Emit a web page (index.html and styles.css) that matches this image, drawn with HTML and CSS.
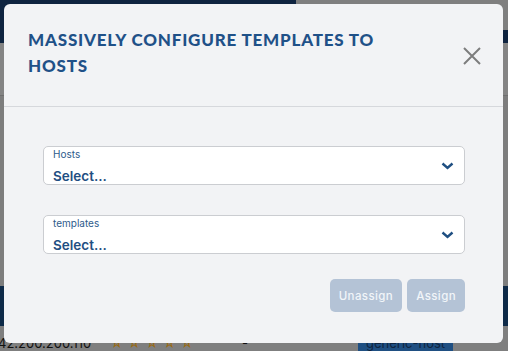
FILE: index.html
```html
<!DOCTYPE html>
<html lang="en">
<head>
    <meta charset="UTF-8">
    <title>Templates</title>
    <link rel="stylesheet" href="styles.css">
</head>
<body>
    <!-- page behind the dimmed overlay -->
    <div class="page">
        <div class="topbar">
            <div class="topbar-dark"></div>
            <div class="topbar-rest"></div>
        </div>
        <div class="toolbar"></div>
        <div class="content"></div>
        <div class="table-head"></div>
        <div class="table-row">
            <span class="ip">42.200.200.110</span>
            <span class="stars">&#9734;&#9734;&#9734;&#9734;&#9734;</span>
            <span class="dash">-</span>
            <span class="tag">generic-host</span>
        </div>
    </div>

    <div class="modal">
        <div class="modal-header">
            <h2 class="modal-title">Massively configure templates to hosts</h2>
            <button class="close" type="button">
                <svg width="18" height="18" viewBox="0 0 18 18">
                    <path d="M1 1 L17 17 M17 1 L1 17" stroke="#7d7d7d" stroke-width="2" fill="none"/>
                </svg>
            </button>
        </div>
        <div class="modal-body">
            <div class="select">
                <div class="select-text">
                    <span class="select-label">Hosts</span>
                    <span class="select-value">Select...</span>
                </div>
                <svg class="chevron" width="13" height="8" viewBox="0 0 13 8">
                    <path d="M1.5 1.5 L6.5 6 L11.5 1.5" stroke="#1f4f82" stroke-width="2.4" fill="none"/>
                </svg>
            </div>
            <div class="select">
                <div class="select-text">
                    <span class="select-label">templates</span>
                    <span class="select-value">Select...</span>
                </div>
                <svg class="chevron" width="13" height="8" viewBox="0 0 13 8">
                    <path d="M1.5 1.5 L6.5 6 L11.5 1.5" stroke="#1f4f82" stroke-width="2.4" fill="none"/>
                </svg>
            </div>
            <div class="actions">
                <button class="btn" type="button" disabled>Unassign</button>
                <button class="btn" type="button" disabled>Assign</button>
            </div>
        </div>
    </div>
</body>
</html>
```
FILE: styles.css
```css
* {
    margin: 0;
    padding: 0;
    box-sizing: border-box;
}

body {
    width: 508px;
    height: 351px;
    overflow: hidden;
    position: relative;
    background-color: #7f7f7f;
    font-family: "Inter", "Liberation Sans", sans-serif;
}

/* page under the overlay */
.page {
    display: flex;
    flex-direction: column;
    height: 351px;
}

.topbar {
    display: flex;
    height: 43px;
}

.topbar-dark {
    width: 296px;
    background-color: #0f2440;
}

.topbar-rest {
    flex: 1;
    background: linear-gradient(#7f7f7f 0, #7f7f7f 30px, #0f2440 30px);
}

.toolbar {
    height: 53px;
    border-bottom: 1px solid #6f6f6f;
    background-color: #848484;
}

.content {
    height: 190px;
    background-color: #7d7d7d;
}

.table-head {
    height: 40px;
    background-color: #0e2a48;
}

.table-row {
    flex: 1;
    display: flex;
    align-items: flex-start;
    background-color: #7f7f7f;
    font-size: 13px;
    color: #111;
    padding-top: 9px;
}

.ip {
    margin-left: -2px;
    width: 112px;
}

.stars {
    color: #9a6a10;
    letter-spacing: 4px;
    width: 132px;
}

.dash {
    width: 116px;
}

.tag {
    background-color: #1f4f82;
    color: #0f2440;
    padding: 0 8px;
}

/* modal */
.modal {
    position: absolute;
    left: 4px;
    top: 4px;
    width: 499px;
    height: 339px;
    background-color: #f2f3f5;
    border-radius: 6px;
}

.modal-header {
    display: flex;
    justify-content: space-between;
    align-items: flex-start;
    height: 103px;
    padding: 23px 22px 0 24px;
    border-bottom: 1px solid #d6d8dc;
}

.modal-title {
    font-family: "Lato", sans-serif;
    font-weight: 900;
    font-size: 17px;
    line-height: 26px;
    letter-spacing: 0.8px;
    text-transform: uppercase;
    color: #1f5188;
    width: 380px;
}

.close {
    border: none;
    background: none;
    margin-top: 20px;
    width: 18px;
    height: 18px;
}

.modal-body {
    padding: 39px 38px 0 39px;
    display: flex;
    flex-direction: column;
    gap: 30px;
}

.select {
    height: 39px;
    background-color: #fff;
    border: 1px solid #cbcdd1;
    border-radius: 5px;
    display: flex;
    align-items: center;
    justify-content: space-between;
    padding: 0 10px 0 9px;
}

.select-text {
    display: flex;
    flex-direction: column;
    margin-top: 2px;
}

.select-label {
    font-size: 10px;
    line-height: 12px;
    color: #2d5b8c;
}

.select-value {
    font-size: 13.5px;
    font-weight: 600;
    line-height: 20px;
    margin-top: 6px;
    color: #1f4f82;
}

.chevron {
    margin-top: 1px;
}

.actions {
    display: flex;
    justify-content: flex-end;
    gap: 5px;
    margin-top: -5px;
}

.btn {
    height: 33px;
    border: none;
    border-radius: 5px;
    background-color: #b4c3d6;
    color: #f1f5f9;
    font-family: "Inter", sans-serif;
    font-size: 11.5px;
    font-weight: 500;
    letter-spacing: 0.4px;
    padding: 0 9px;
}
```
